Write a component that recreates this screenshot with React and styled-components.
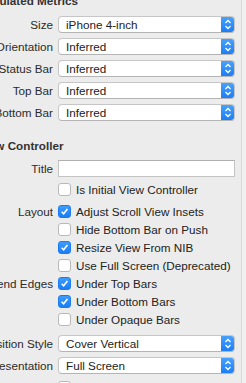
import styled, { createGlobalStyle } from 'styled-components';

const GlobalStyle = createGlobalStyle`
  html, body {
    margin: 0;
    padding: 0;
    overflow: hidden;
    background: #f0f0f0;
  }
  body {
    font-family: 'Liberation Sans', Arial, sans-serif;
    font-size: 11.7px;
    color: #2b2b2b;
  }
`;

const Frame = styled.div`
  display: flex;
  width: 246px;
  height: 383px;
  overflow: hidden;
`;

const Panel = styled.div`
  flex: none;
  display: flex;
  flex-direction: column;
  width: 263px;
  margin-left: -22px;
  background: #ececec;
  border-right: 1px solid #d9d9d9;
`;

const Header = styled.div`
  height: 14px;
  line-height: 14px;
  margin-top: ${({ $top }) => $top}px;
  font-weight: bold;
  color: #333;
  white-space: nowrap;
`;

const Group = styled.div`
  display: flex;
  flex-direction: column;
  gap: ${({ $gap }) => $gap || 0}px;
  margin-top: ${({ $top }) => $top || 0}px;
`;

const Row = styled.div`
  display: grid;
  grid-template-columns: 75px 1fr;
  column-gap: 5px;
  align-items: center;
  height: ${({ $h }) => $h}px;
  padding-right: 6px;
`;

const Label = styled.div`
  display: flex;
  justify-content: flex-end;
  overflow: hidden;
  white-space: nowrap;
  color: #2b2b2b;
`;

const Separator = styled.div`
  height: 1px;
  background: #d6d6d6;
  margin-top: ${({ $top }) => $top}px;
  margin-right: ${({ $short }) => ($short ? 7 : 0)}px;
`;

const PopUp = styled.div`
  display: flex;
  align-items: stretch;
  height: 17px;
  box-sizing: border-box;
  background: #fff;
  border: 1px solid #c6c6c6;
  border-bottom-color: #b4b4b4;
  border-radius: 4px;
  overflow: hidden;
`;

const PopText = styled.div`
  flex: 1;
  padding-left: 7px;
  line-height: 15px;
  color: #222;
  white-space: nowrap;
`;

const Arrows = styled.div`
  width: 14px;
  display: flex;
  align-items: center;
  justify-content: center;
  margin: -1px -1px -1px 0;
  background: linear-gradient(#4aa3fd, #1a7cf4);
`;

const TextField = styled.div`
  height: 17px;
  box-sizing: border-box;
  background: #fff;
  border: 1px solid #c4c4c4;
  border-top-color: #b0b0b0;
`;

const CheckLine = styled.div`
  display: flex;
  align-items: center;
  gap: 5px;
  white-space: nowrap;
  color: #222;
`;

const Box = styled.div`
  flex: none;
  width: 13px;
  height: 13px;
  box-sizing: border-box;
  border-radius: 3px;
  display: flex;
  align-items: center;
  justify-content: center;
  background: ${({ $on }) => ($on ? 'linear-gradient(#3d9cfd, #1a7df4)' : '#fff')};
  border: 1px solid ${({ $on }) => ($on ? '#1a7cf0' : '#b9b9b9')};
`;

const Chevrons = () => (
  <svg width="8" height="11" viewBox="0 0 8 11">
    <path d="M1.5 4 L4 1.5 L6.5 4 M1.5 7 L4 9.5 L6.5 7" fill="none" stroke="#fff" strokeWidth="1.3" />
  </svg>
);

const Tick = () => (
  <svg width="9" height="9" viewBox="0 0 9 9">
    <path d="M1.6 4.8 L3.6 6.8 L7.4 2" fill="none" stroke="#fff" strokeWidth="1.6" />
  </svg>
);

const Popup = ({ label, value }) => (
  <Row $h={17}>
    <Label>{label}</Label>
    <PopUp>
      <PopText>{value}</PopText>
      <Arrows>
        <Chevrons />
      </Arrows>
    </PopUp>
  </Row>
);

const Check = ({ label = '', text = '', on = false }) => (
  <Row $h={18}>
    <Label>{label}</Label>
    <CheckLine>
      <Box $on={on}>{on && <Tick />}</Box>
      {text}
    </CheckLine>
  </Row>
);

const metrics = [
  ['Size', 'iPhone 4-inch'],
  ['Orientation', 'Inferred'],
  ['Status Bar', 'Inferred'],
  ['Top Bar', 'Inferred'],
  ['Bottom Bar', 'Inferred'],
];

const options = [
  ['Layout', 'Adjust Scroll View Insets', true],
  ['', 'Hide Bottom Bar on Push', false],
  ['', 'Resize View From NIB', true],
  ['', 'Use Full Screen (Deprecated)', false],
  ['Extend Edges', 'Under Top Bars', true],
  ['', 'Under Bottom Bars', true],
  ['', 'Under Opaque Bars', false],
];

const App = () => (
  <Frame>
    <GlobalStyle />
    <Panel>
      <Header $top={-6}>Simulated Metrics</Header>
      <Group $top={8} $gap={5}>
        {metrics.map(([label, value]) => (
          <Popup key={label} label={label} value={value} />
        ))}
      </Group>
      <Separator $top={15} />
      <Header $top={3}>View Controller</Header>
      <Group $top={7}>
        <Row $h={17}>
          <Label>Title</Label>
          <TextField />
        </Row>
      </Group>
      <Group $top={3}>
        <Check text="Is Initial View Controller" />
      </Group>
      <Separator $top={2} $short />
      <Group $top={2}>
        {options.map(([label, text, on]) => (
          <Check key={text} label={label} text={text} on={on} />
        ))}
      </Group>
      <Separator $top={2} $short />
      <Group $top={5} $gap={5}>
        <Popup label="Transition Style" value="Cover Vertical" />
        <Popup label="Presentation" value="Full Screen" />
      </Group>
      <Group $top={4}>
        <Check />
      </Group>
    </Panel>
  </Frame>
);

export default App;
